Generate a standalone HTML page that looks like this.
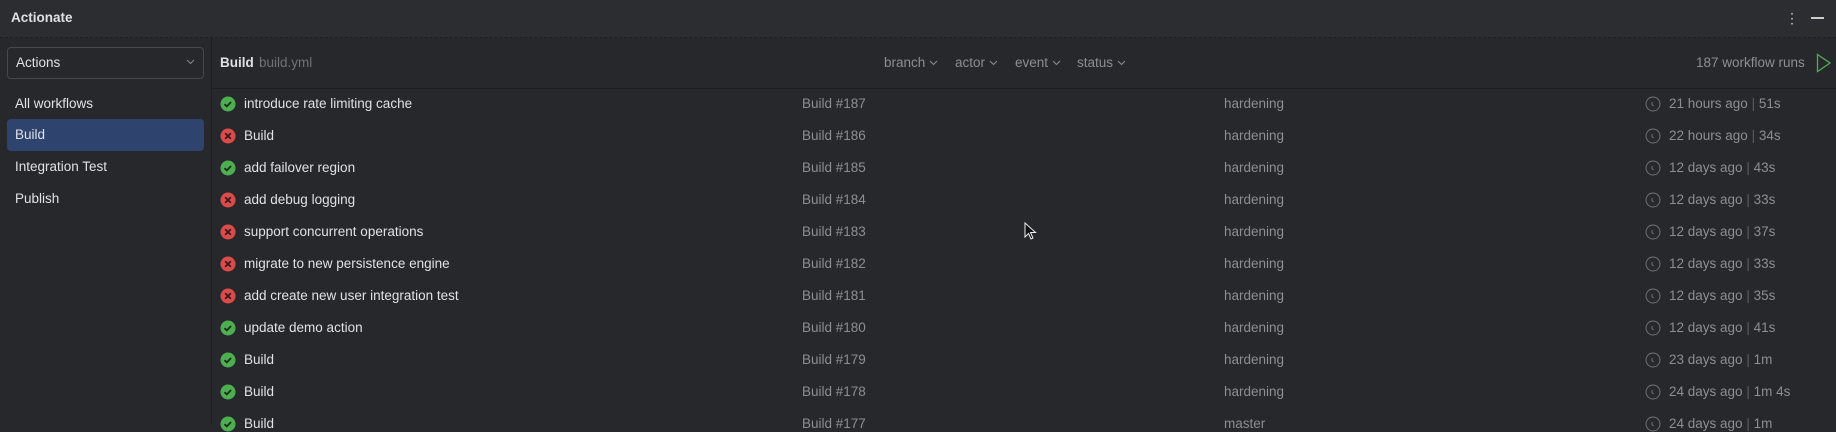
<!DOCTYPE html>
<html><head><meta charset="utf-8"><style>
*{margin:0;padding:0;box-sizing:border-box}
body{width:1836px;height:424px;overflow:hidden;background:#27282b;font-family:"Liberation Sans",sans-serif;font-size:13.5px;color:#dfe1e5;position:relative}
.a{position:absolute;white-space:nowrap;line-height:16px}
.top{position:absolute;left:0;top:0;width:1836px;height:38px;background:#2b2d30;border-bottom:1px dashed #1e1f22}
.side{position:absolute;left:211px;top:38px;width:1px;height:386px;background:#1e1f22}
.hl{position:absolute;left:212px;top:88px;width:1624px;height:1px;background:#1e1f22}
.g{color:#8b8e94}
.chev{display:inline-block;margin-left:4px;vertical-align:middle}
</style></head><body>
<div class="top"></div>
<div class="a" style="left:11px;top:10px;font-weight:bold;font-size:13.5px">Actionate</div>
<div class="a" style="left:1785px;top:9px;color:#ccc;font-size:14px;line-height:18px">&#8942;</div>
<div style="position:absolute;left:1811px;top:17px;width:13px;height:1.5px;background:#ccc"></div>
<div class="side"></div>
<div class="hl"></div>
<div style="position:absolute;left:7px;top:47px;width:197px;height:32px;border:1px solid #46484d;border-radius:4px"></div>
<div class="a" style="left:16px;top:55px">Actions</div>
<svg style="position:absolute;left:186px;top:59px" width="9" height="6"><path d="M1 1l3.5 3.5L8 1" stroke="#888" fill="none"/></svg>
<div class="a" style="left:15px;top:96px">All workflows</div>
<div style="position:absolute;left:7px;top:119px;width:197px;height:32px;background:#2e436e;border-radius:4px"></div>
<div class="a" style="left:15px;top:127px">Build</div>
<div class="a" style="left:15px;top:159px">Integration Test</div>
<div class="a" style="left:15px;top:191px">Publish</div>
<div class="a" style="left:220px;top:55px;font-weight:bold">Build</div>
<div class="a g" style="left:259px;top:55px;color:#6f737a">build.yml</div>
<div class="a g" style="left:884px;top:55px">branch<svg class="chev" width="9" height="6"><path d="M1 1l3.5 3.5L8 1" stroke="#8b8e94" fill="none"/></svg></div>
<div class="a g" style="left:955px;top:55px">actor<svg class="chev" width="9" height="6"><path d="M1 1l3.5 3.5L8 1" stroke="#8b8e94" fill="none"/></svg></div>
<div class="a g" style="left:1015px;top:55px">event<svg class="chev" width="9" height="6"><path d="M1 1l3.5 3.5L8 1" stroke="#8b8e94" fill="none"/></svg></div>
<div class="a g" style="left:1077px;top:55px">status<svg class="chev" width="9" height="6"><path d="M1 1l3.5 3.5L8 1" stroke="#8b8e94" fill="none"/></svg></div>
<div class="a g" style="left:1696px;top:55px">187 workflow runs</div>
<svg style="position:absolute;left:1816px;top:53px" width="16" height="20"><path d="M1.5 1.5L14 10 1.5 18.5z" stroke="#4caf50" stroke-width="1.3" fill="none"/></svg>
<div id="rows"></div>
<svg style="position:absolute;left:1024px;top:222px" width="14" height="20"><path d="M1 1v14l3.5-3.5 2.5 5.5 2-1-2.5-5.5h5z" fill="#111" stroke="#eee" stroke-width="1"/></svg>
<script>
var d=[["ok","introduce rate limiting cache",187,"hardening","21 hours ago","51s"],["x","Build",186,"hardening","22 hours ago","34s"],["ok","add failover region",185,"hardening","12 days ago","43s"],["x","add debug logging",184,"hardening","12 days ago","33s"],["x","support concurrent operations",183,"hardening","12 days ago","37s"],["x","migrate to new persistence engine",182,"hardening","12 days ago","33s"],["x","add create new user integration test",181,"hardening","12 days ago","35s"],["ok","update demo action",180,"hardening","12 days ago","41s"],["ok","Build",179,"hardening","23 days ago","1m"],["ok","Build",178,"hardening","24 days ago","1m 4s"],["ok","Build",177,"master","24 days ago","1m"]];
var h="";
d.forEach(function(r,i){var c=104+i*32,t=c-8;
var ic=r[0]=="ok"?'<circle cx="8" cy="8" r="7.5" fill="#4caf50"/><path d="M4.5 8.2l2.3 2.2 4.3-4.4" stroke="#1e2a1e" stroke-width="1.8" fill="none"/>':'<circle cx="8" cy="8" r="7.5" fill="#db4b4b"/><path d="M5.2 5.2l5.6 5.6M10.8 5.2l-5.6 5.6" stroke="#3a1a1a" stroke-width="1.8"/>';
h+='<svg style="position:absolute;left:220px;top:'+(c-8)+'px" width="16" height="16">'+ic+'</svg>';
h+='<div class="a" style="left:244px;top:'+t+'px">'+r[1]+'</div>';
h+='<div class="a g" style="left:802px;top:'+t+'px">Build #'+r[2]+'</div>';
h+='<div class="a g" style="left:1224px;top:'+t+'px">'+r[3]+'</div>';
h+='<svg style="position:absolute;left:1645px;top:'+(c-8)+'px" width="16" height="16"><circle cx="8" cy="8" r="7" stroke="#6f737a" fill="none"/><path d="M7 6v2.5l1.5 1.5" stroke="#6f737a" fill="none"/></svg>';
h+='<div class="a g" style="left:1669px;top:'+t+'px">'+r[4]+' <span style="color:#5a5d63">|</span> '+r[5]+'</div>';});
document.getElementById("rows").innerHTML=h;
</script>
</body></html>
